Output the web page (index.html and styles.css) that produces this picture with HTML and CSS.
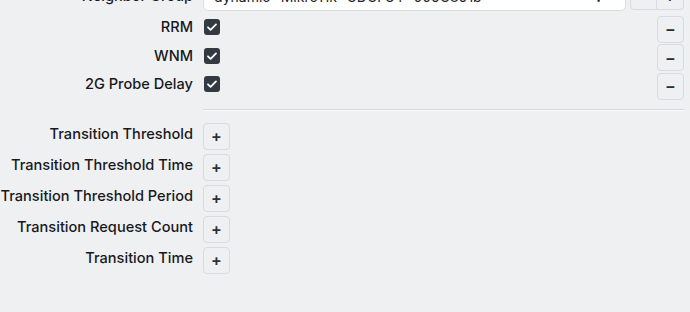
FILE: index.html
```html
<!DOCTYPE html>
<html>
<head>
<meta charset="utf-8">
<link rel="stylesheet" href="styles.css">
</head>
<body>
<div class="form">
  <div class="row row-top">
    <label class="lbl">Neighbor Group</label>
    <div class="ctrl">
      <div class="select">
        <span class="select-text">dynamic- MikroTik- CDCF34- 009C891b</span>
        <span class="select-icons"><span class="ic-dark">:</span><span class="ic-light">·</span></span>
      </div>
    </div>
    <div class="btn-group">
      <button class="btn">−</button>
      <button class="btn">+</button>
    </div>
  </div>
  <div class="row">
    <label class="lbl">RRM</label>
    <div class="ctrl"><span class="check"><svg viewBox="0 0 16 16" width="16" height="16"><path d="M4 8.3l2.6 2.5L12 5.4" fill="none" stroke="#fff" stroke-width="1.8" stroke-linecap="round" stroke-linejoin="round"/></svg></span></div>
    <button class="btn">−</button>
  </div>
  <div class="row">
    <label class="lbl">WNM</label>
    <div class="ctrl"><span class="check"><svg viewBox="0 0 16 16" width="16" height="16"><path d="M4 8.3l2.6 2.5L12 5.4" fill="none" stroke="#fff" stroke-width="1.8" stroke-linecap="round" stroke-linejoin="round"/></svg></span></div>
    <button class="btn">−</button>
  </div>
  <div class="row">
    <label class="lbl">2G Probe Delay</label>
    <div class="ctrl"><span class="check"><svg viewBox="0 0 16 16" width="16" height="16"><path d="M4 8.3l2.6 2.5L12 5.4" fill="none" stroke="#fff" stroke-width="1.8" stroke-linecap="round" stroke-linejoin="round"/></svg></span></div>
    <button class="btn">−</button>
  </div>
  <div class="sep-row"><div class="sep"></div></div>
  <div class="adds">
    <div class="row add"><label class="lbl">Transition Threshold</label><button class="btn">+</button></div>
    <div class="row add"><label class="lbl">Transition Threshold Time</label><button class="btn">+</button></div>
    <div class="row add"><label class="lbl">Transition Threshold Period</label><button class="btn">+</button></div>
    <div class="row add"><label class="lbl">Transition Request Count</label><button class="btn">+</button></div>
    <div class="row add"><label class="lbl">Transition Time</label><button class="btn">+</button></div>
  </div>
</div>
</body>
</html>
```
FILE: styles.css
```css
html, body {
  margin: 0;
  padding: 0;
  background: #eff0f2;
  font-family: Inter, "Noto Sans", sans-serif;
  font-size: 14.6px;
  font-weight: 500;
  color: #17191c;
  overflow: hidden;
}
.form {
  margin-top: -19px;
  padding-right: 6px;
  display: flex;
  flex-direction: column;
}
.row {
  display: flex;
  align-items: center;
  gap: 10px;
  height: 28.5px;
}
.row-top {
  height: 30px;
  margin-bottom: 4px;
}
.lbl {
  width: 193px;
  flex: none;
  text-align: right;
  white-space: nowrap;
  margin-bottom: 4px;
}
.row-top .lbl { margin-bottom: 0; }
.ctrl {
  flex: 1;
  display: flex;
  align-items: center;
  margin-bottom: 4px;
}
.row-top .ctrl { margin-bottom: 0; }
.select {
  flex: 1;
  height: 30px;
  box-sizing: border-box;
  background: #fff;
  border: 1px solid #dcdee2;
  border-radius: 5px;
  display: flex;
  align-items: center;
  padding: 0 8px 0 10px;
  margin-right: -6px;
  font-size: 14px;
  font-weight: 400;
  color: #212327;
}
.select-text { flex: 1; }
.select-icons { display: flex; gap: 12px; align-items: center; }
.ic-dark { color: #222; font-weight: 700; }
.ic-light { color: #aaa; }
.btn-group {
  display: flex;
}
.btn-group .btn:first-child { border-radius: 4px 0 0 4px; }
.btn-group .btn:last-child { border-radius: 0 4px 4px 0; border-left: none; }
.btn {
  width: 27px;
  height: 27px;
  box-sizing: border-box;
  flex: none;
  padding: 0;
  background: #eff0f2;
  border: 1px solid #d9dbdf;
  border-radius: 4px;
  font-family: Inter, "Noto Sans", sans-serif;
  font-size: 16px;
  font-weight: 600;
  color: #2c3036;
  line-height: 1;
  display: flex;
  align-items: center;
  justify-content: center;
}
.check {
  width: 16px;
  height: 16px;
  margin-left: 1px;
  background: #343a42;
  border-radius: 3px;
  display: flex;
}
.sep-row {
  padding-left: 203px;
  margin-top: 8px;
}
.sep {
  height: 0;
  border-top: 1px solid #d8dadd;
  border-bottom: 1px solid #fafafb;
}
.adds {
  margin-top: 12px;
  display: flex;
  flex-direction: column;
  gap: 4px;
}
.row.add {
  height: 27px;
}
```
